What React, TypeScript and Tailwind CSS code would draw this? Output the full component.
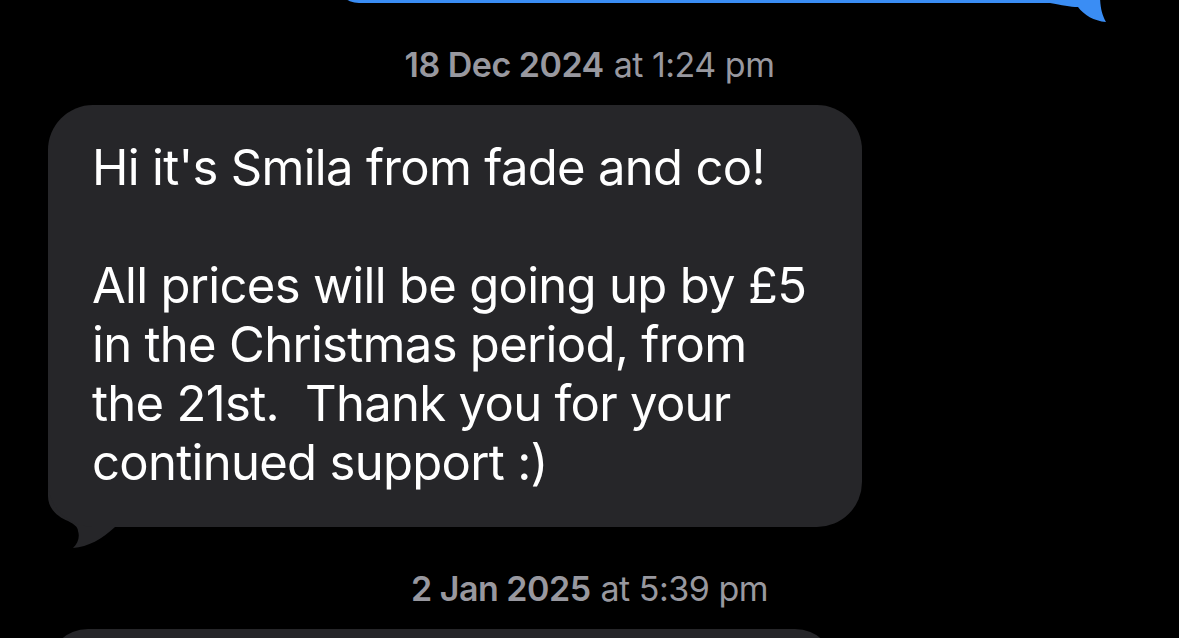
import React from 'react';

const font = { fontFamily: 'Inter, "Noto Sans", sans-serif' };

const Stamp = ({ date, time }: { date: string; time: string }) => (
  <div className="flex justify-center text-[34px] leading-[34px] text-[#98989f] tracking-[-0.5px]">
    <span className="font-semibold">{date}</span>
    <span className="ml-[10px]">at {time}</span>
  </div>
);

const lines = [
  "Hi it's Smila from fade and co!",
  '',
  'All prices will be going up by £5',
  'in the Christmas period, from',
  'the 21st.  Thank you for your',
  'continued support :)',
];

export default function App() {
  return (
    <div className="w-[1179px] h-[638px] bg-black overflow-hidden flex flex-col" style={font}>
      {/* sent bubble, only its bottom edge is in view */}
      <div className="relative ml-[335px] w-[755px] h-[48px] -mt-[45px] shrink-0">
        <svg className="absolute -right-[20px] top-0" width="60" height="70" viewBox="0 0 60 70">
          <path d="M0 48 L40 0 L50 0 L50 40 C50 52 52 60 56 67 C44 66 34 60 28 52 C20 52 12 50 0 48 Z" fill="#3a8df4" />
        </svg>
        <div className="relative h-full rounded-[45px] bg-[#3a8df4]" />
      </div>

      <div className="mt-[45px]">
        <Stamp date="18 Dec 2024" time="1:24 pm" />
      </div>

      {/* received bubble */}
      <div className="relative ml-[48px] mt-[23px] w-[814px] shrink-0">
        <svg className="absolute -left-[8px] -bottom-[24px]" width="90" height="90" viewBox="0 0 90 90">
          <path d="M8 0 L8 35 C8 48 18 56 28 60 C34 63 38 66 38 70 C40 76 38 82 33 87 C48 86 62 78 75 66 L90 66 L90 0 Z" fill="#262629" />
        </svg>
        <div className="relative rounded-[45px] bg-[#262629] pl-[44px] pt-[33px] pb-[35px] text-white text-[49px] leading-[59px] tracking-[-0.7px]">
          {lines.map((l, i) => (
            <div key={i} className="whitespace-pre h-[59px]">{l}</div>
          ))}
        </div>
      </div>

      <div className="mt-[45px]">
        <Stamp date="2 Jan 2025" time="5:39 pm" />
      </div>

      <div className="ml-[48px] mt-[23px] w-[787px] h-[80px] shrink-0 rounded-[45px] bg-[#262629]" />
    </div>
  );
}
